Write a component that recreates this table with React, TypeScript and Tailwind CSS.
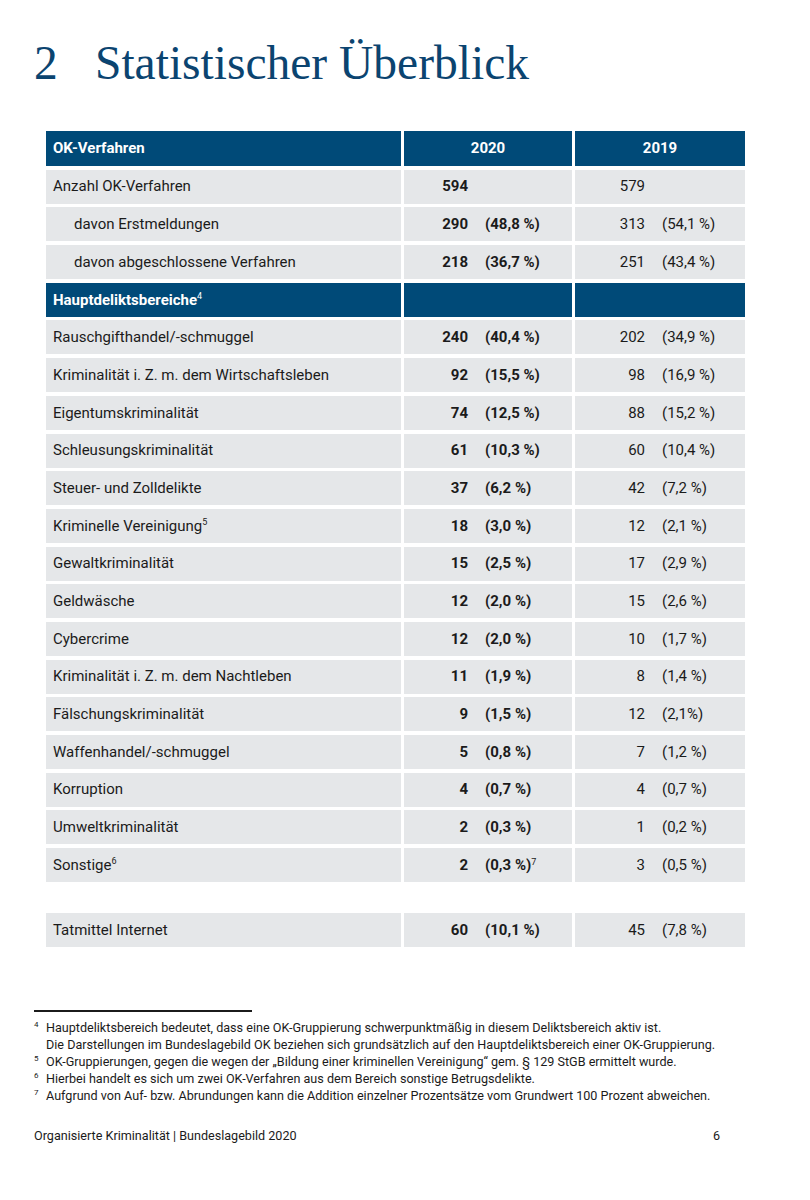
import React from 'react';

type Row = {
  label: string;
  sup?: string;
  indent?: boolean;
  n20: string;
  p20?: string;
  p20sup?: string;
  n19: string;
  p19?: string;
};

const topRows: Row[] = [
  { label: 'Anzahl OK-Verfahren', n20: '594', n19: '579' },
  { label: 'davon Erstmeldungen', indent: true, n20: '290', p20: '(48,8 %)', n19: '313', p19: '(54,1 %)' },
  { label: 'davon abgeschlossene Verfahren', indent: true, n20: '218', p20: '(36,7 %)', n19: '251', p19: '(43,4 %)' },
];

const areaRows: Row[] = [
  { label: 'Rauschgifthandel/-schmuggel', n20: '240', p20: '(40,4 %)', n19: '202', p19: '(34,9 %)' },
  { label: 'Kriminalität i. Z. m. dem Wirtschaftsleben', n20: '92', p20: '(15,5 %)', n19: '98', p19: '(16,9 %)' },
  { label: 'Eigentumskriminalität', n20: '74', p20: '(12,5 %)', n19: '88', p19: '(15,2 %)' },
  { label: 'Schleusungskriminalität', n20: '61', p20: '(10,3 %)', n19: '60', p19: '(10,4 %)' },
  { label: 'Steuer- und Zolldelikte', n20: '37', p20: '(6,2 %)', n19: '42', p19: '(7,2 %)' },
  { label: 'Kriminelle Vereinigung', sup: '5', n20: '18', p20: '(3,0 %)', n19: '12', p19: '(2,1 %)' },
  { label: 'Gewaltkriminalität', n20: '15', p20: '(2,5 %)', n19: '17', p19: '(2,9 %)' },
  { label: 'Geldwäsche', n20: '12', p20: '(2,0 %)', n19: '15', p19: '(2,6 %)' },
  { label: 'Cybercrime', n20: '12', p20: '(2,0 %)', n19: '10', p19: '(1,7 %)' },
  { label: 'Kriminalität i. Z. m. dem Nachtleben', n20: '11', p20: '(1,9 %)', n19: '8', p19: '(1,4 %)' },
  { label: 'Fälschungskriminalität', n20: '9', p20: '(1,5 %)', n19: '12', p19: '(2,1%)' },
  { label: 'Waffenhandel/-schmuggel', n20: '5', p20: '(0,8 %)', n19: '7', p19: '(1,2 %)' },
  { label: 'Korruption', n20: '4', p20: '(0,7 %)', n19: '4', p19: '(0,7 %)' },
  { label: 'Umweltkriminalität', n20: '2', p20: '(0,3 %)', n19: '1', p19: '(0,2 %)' },
  { label: 'Sonstige', sup: '6', n20: '2', p20: '(0,3 %)', p20sup: '7', n19: '3', p19: '(0,5 %)' },
];

const footnotes = [
  {
    n: '4',
    lines: [
      'Hauptdeliktsbereich bedeutet, dass eine OK-Gruppierung schwerpunktmäßig in diesem Deliktsbereich aktiv ist.',
      'Die Darstellungen im Bundeslagebild OK beziehen sich grundsätzlich auf den Hauptdeliktsbereich einer OK-Gruppierung.',
    ],
  },
  { n: '5', lines: ['OK-Gruppierungen, gegen die wegen der „Bildung einer kriminellen Vereinigung“ gem. § 129 StGB ermittelt wurde.'] },
  { n: '6', lines: ['Hierbei handelt es sich um zwei OK-Verfahren aus dem Bereich sonstige Betrugsdelikte.'] },
  { n: '7', lines: ['Aufgrund von Auf- bzw. Abrundungen kann die Addition einzelner Prozentsätze vom Grundwert 100 Prozent abweichen.'] },
];

function DataRow({ row }: { row: Row }) {
  return (
    <>
      <div className={`h-[34px] bg-[#e5e7e9] flex items-center ${row.indent ? 'pl-[28px]' : 'pl-[7px]'}`}>
        {row.label}
        {row.sup && <sup className="text-[9px] -top-[0.4em]">{row.sup}</sup>}
      </div>
      <div className="h-[34px] bg-[#e5e7e9] flex items-center font-bold">
        <span className="w-[64px] text-right">{row.n20}</span>
        {row.p20 && (
          <span className="ml-[17px]">
            {row.p20}
            {row.p20sup && <sup className="text-[9px] font-normal">{row.p20sup}</sup>}
          </span>
        )}
      </div>
      <div className="h-[34px] bg-[#e5e7e9] flex items-center">
        <span className="w-[70px] text-right">{row.n19}</span>
        {row.p19 && <span className="ml-[17px]">{row.p19}</span>}
      </div>
    </>
  );
}

export default function App() {
  return (
    <div className="w-[810px] h-[1200px] bg-white text-[#1b1b1b] flex flex-col font-['Roboto',sans-serif]">
      {/* Title */}
      <h1 className="mt-[35px] ml-[34px] flex text-[47.5px] leading-[56px] text-[#0b4470] font-['Liberation_Serif',serif]">
        <span className="w-[61px]">2</span>
        <span>Statistischer Überblick</span>
      </h1>

      {/* Table */}
      <div className="mt-[40px] ml-[46px] grid grid-cols-[355px_168px_170px] gap-x-[3px] gap-y-[3.7px] text-[15px]">
        <div className="h-[35px] bg-[#004a78] text-white font-bold flex items-center pl-[7px]">OK-Verfahren</div>
        <div className="h-[35px] bg-[#004a78] text-white font-bold flex items-center justify-center">2020</div>
        <div className="h-[35px] bg-[#004a78] text-white font-bold flex items-center justify-center">2019</div>

        {topRows.map((r) => (
          <DataRow key={r.label} row={r} />
        ))}

        <div className="h-[34px] bg-[#004a78] text-white font-bold flex items-center pl-[7px]">
          Hauptdeliktsbereiche<sup className="text-[9px] font-normal -top-[0.4em]">4</sup>
        </div>
        <div className="h-[34px] bg-[#004a78]" />
        <div className="h-[34px] bg-[#004a78]" />

        {areaRows.map((r) => (
          <DataRow key={r.label} row={r} />
        ))}

        <div className="col-span-3 h-[24px]" />

        <DataRow row={{ label: 'Tatmittel Internet', n20: '60', p20: '(10,1 %)', n19: '45', p19: '(7,8 %)' }} />
      </div>

      {/* Footnotes */}
      <div className="mt-[63px] ml-[34px] w-[218px] border-t-2 border-[#1b1b1b]" />
      <div className="mt-[7px] ml-[34px] flex flex-col text-[12.6px] leading-[17px]">
        {footnotes.map((f) => (
          <div key={f.n} className="flex">
            <span className="w-[12px] text-[8px] leading-[12px]">{f.n}</span>
            <div className="flex flex-col">
              {f.lines.map((l) => (
                <span key={l}>{l}</span>
              ))}
            </div>
          </div>
        ))}
      </div>

      {/* Footer */}
      <div className="mt-[23px] ml-[34px] w-[686px] flex justify-between text-[12.6px]">
        <span>Organisierte Kriminalität | Bundeslagebild 2020</span>
        <span>6</span>
      </div>
    </div>
  );
}
